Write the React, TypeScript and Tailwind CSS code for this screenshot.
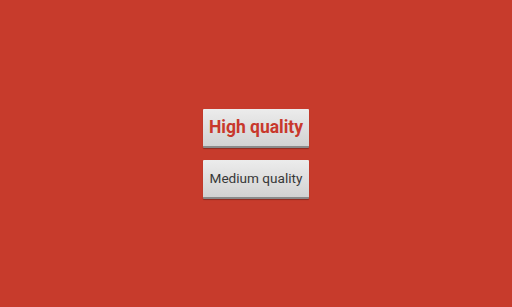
export default function App() {
  return (
    <div className="flex h-[307px] w-[512px] flex-col items-center justify-center gap-[12px] bg-[#c73b2c] font-['Roboto',sans-serif]">
      <button className="flex h-[39px] w-[106px] items-center justify-center rounded-[1px] border-b-2 border-[#8a8a8a] bg-gradient-to-b from-[#ececec] to-[#d2d2d2] text-[17.5px] font-bold text-[#c8382c] shadow-[0_1px_1px_rgba(0,0,0,0.3)]">
        High quality
      </button>
      <button className="flex h-[39px] w-[106px] items-center justify-center rounded-[1px] border-b-2 border-[#8a8a8a] bg-gradient-to-b from-[#ececec] to-[#d2d2d2] text-[13.6px] text-[#383838] shadow-[0_1px_1px_rgba(0,0,0,0.3)]">
        Medium quality
      </button>
    </div>
  );
}
